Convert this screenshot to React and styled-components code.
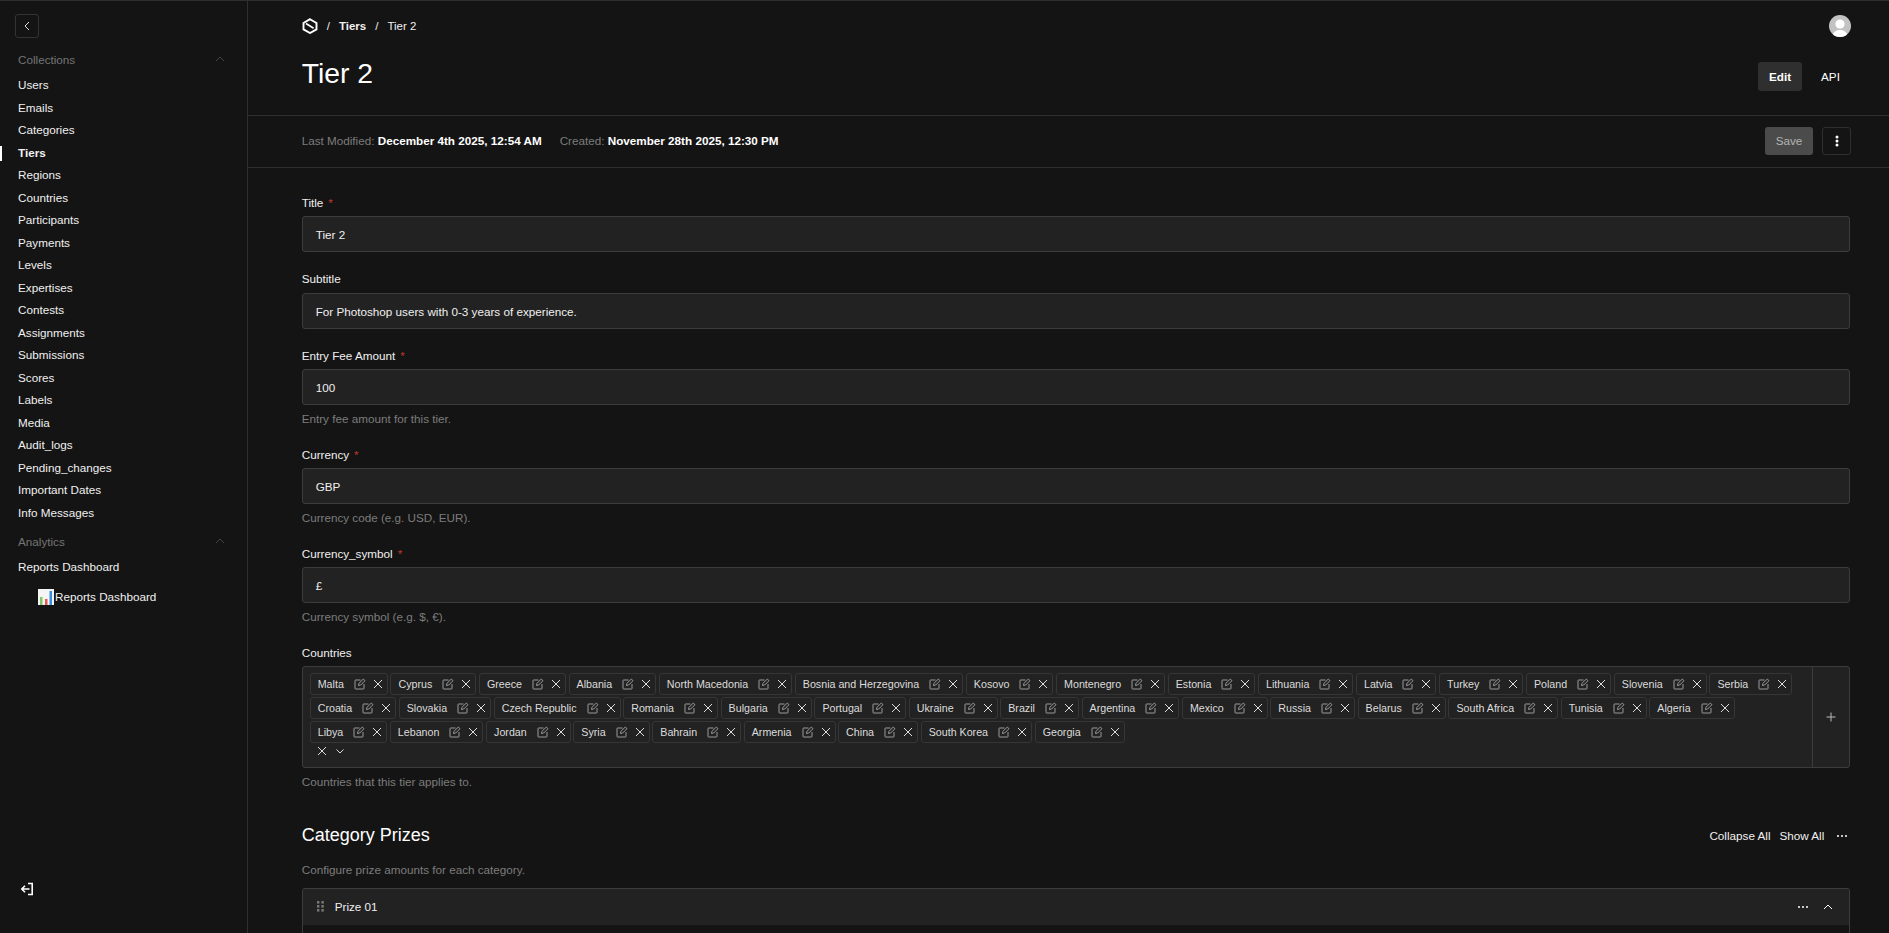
import React from 'react';
import styled, { createGlobalStyle } from 'styled-components';

const GlobalStyle = createGlobalStyle`
    html, body {
        margin: 0;
        height: 100%;
        overflow: hidden;
        background: #141414;
    }
    body {
        font-family: "Liberation Sans", Arial, sans-serif;
        font-size: 13px;
        color: #fff;
    }
    * {
        box-sizing: border-box;
    }
`

const Page = styled.div`
    display: flex;
    height: 933px;
    overflow: hidden;
    border-top: 1px solid #2f2f2f;
`

const Sidebar = styled.aside`
    width: 248px;
    flex-shrink: 0;
    border-right: 1px solid #2f2f2f;
    padding: 13px 0 0 18px;
    position: relative;
`

const BackButton = styled.div`
    width: 24px;
    height: 24px;
    margin-left: -3px;
    border: 1px solid #333;
    border-radius: 3px;
    display: flex;
    align-items: center;
    justify-content: center;
`

const GroupHead = styled.div`
    display: flex;
    justify-content: space-between;
    align-items: center;
    height: 16px;
    margin-top: ${props => props.$top}px;
    margin-bottom: ${props => props.$bottom}px;
    padding-right: 21px;
    color: #747474;
    font-size: 11.7px;
`

const NavItem = styled.div`
    height: 22.5px;
    line-height: 22.5px;
    color: #f0f0f0;
    font-size: 11.7px;
    font-weight: ${props => props.$active ? 700 : 400};
    position: relative;
`

const ActiveMark = styled.span`
    position: absolute;
    left: -18px;
    top: 4px;
    width: 2px;
    height: 15px;
    background: #fff;
`

const SubLink = styled.div`
    display: flex;
    align-items: center;
    gap: 1px;
    margin: 10px 0 0 20px;
    font-size: 11.7px;
    color: #f0f0f0;
`

const Logout = styled.div`
    position: absolute;
    left: 20px;
    top: 881px;
    display: flex;
`

const Main = styled.main`
    flex: 1;
    min-width: 0;
    overflow: hidden;
`

const Header = styled.header`
    height: 115px;
    padding: 0 38px 0 53.7px;
    border-bottom: 1px solid #2f2f2f;
    display: grid;
    grid-template-columns: 1fr auto;
    align-content: start;
`

const Crumbs = styled.div`
    display: flex;
    align-items: center;
    height: 50px;
    font-size: 11.5px;
    color: #f0f0f0;
`

const CrumbSep = styled.span`
    margin: 0 9px;
`

const Avatar = styled.div`
    display: flex;
    align-items: center;
    justify-content: flex-end;
    height: 50px;
`

const PageTitle = styled.h1`
    margin: 0;
    font-size: 28.3px;
    font-weight: 400;
    line-height: 44px;
`

const Tabs = styled.div`
    display: flex;
    align-items: flex-start;
    justify-content: flex-end;
    padding-top: 11px;
    gap: 8px;
`

const Tab = styled.div`
    width: ${props => props.$width}px;
    height: 29px;
    line-height: 29px;
    text-align: center;
    border-radius: 3px;
    font-size: 11.7px;
    font-weight: ${props => props.$active ? 700 : 400};
    background: ${props => props.$active ? '#2f2f2f' : 'transparent'};
`

const MetaBar = styled.div`
    display: flex;
    align-items: center;
    justify-content: space-between;
    height: 52px;
    padding: 0 38px 1px 53.7px;
    border-bottom: 1px solid #2f2f2f;
`

const MetaText = styled.div`
    display: flex;
    gap: 18px;
    margin-bottom: 1px;
    font-size: 11.7px;
    color: #7c7c7c;
    b {
        color: #fff;
    }
`

const MetaActions = styled.div`
    display: flex;
    align-items: center;
    gap: 9px;
`

const SaveButton = styled.div`
    width: 48px;
    height: 28px;
    line-height: 28px;
    text-align: center;
    border-radius: 3px;
    background: #4b4b4b;
    color: #b4b4b4;
    font-size: 11.7px;
`

const MoreButton = styled.div`
    width: 29px;
    height: 28px;
    border: 1px solid #2f2f2f;
    border-radius: 3px;
    display: flex;
    align-items: center;
    justify-content: center;
`

const Form = styled.div`
    padding: 26.5px 38.7px 0 53.7px;
`

const Field = styled.div`
    margin-bottom: ${props => props.$bottom}px;
`

const Label = styled.label`
    display: block;
    font-size: 11.7px;
    line-height: 16px;
    margin-bottom: 5.5px;
    color: #f0f0f0;
    span {
        color: #c0392b;
        margin-left: 5px;
    }
`

const Input = styled.div`
    height: 36px;
    line-height: 35px;
    padding: 0 13px;
    background: #222;
    border: 1px solid #3c3c3c;
    border-radius: 3px;
    font-size: 11.7px;
    color: #f0f0f0;
`

const Hint = styled.div`
    margin-top: 5.5px;
    font-size: 11.7px;
    line-height: 16px;
    color: #7c7c7c;
`

const SelectBox = styled.div`
    display: flex;
    height: 102px;
    background: #222;
    border: 1px solid #3c3c3c;
    border-radius: 3px;
`

const ChipArea = styled.div`
    flex: 1;
    min-width: 0;
    padding: 6px 7px;
`

const ChipList = styled.div`
    display: flex;
    flex-wrap: wrap;
    gap: 2px 2.6px;
`

const Chip = styled.div`
    display: flex;
    align-items: center;
    height: 22px;
    padding: 0 3px 0 7px;
    border: 1px solid #363636;
    border-radius: 3px;
    font-size: 10.7px;
    color: #dcdcdc;
    svg:first-of-type {
        margin-left: 10px;
        margin-right: 6px;
    }
`

const SelectControls = styled.div`
    display: flex;
    align-items: center;
    gap: 6px;
    margin: 2px 0 0 6px;
`

const AddButton = styled.div`
    width: 37px;
    flex-shrink: 0;
    border-left: 1px solid #3c3c3c;
    display: flex;
    align-items: center;
    justify-content: center;
`

const SectionHead = styled.div`
    display: flex;
    align-items: center;
    justify-content: space-between;
    margin-top: 34px;
    height: 24px;
`

const SectionTitle = styled.h2`
    margin: 0;
    font-size: 18px;
    font-weight: 400;
`

const SectionActions = styled.div`
    display: flex;
    align-items: center;
    gap: 9px;
    font-size: 11.7px;
    color: #f0f0f0;
    padding-right: 2px;
    svg {
        margin-left: 3px;
    }
`

const SectionNote = styled.div`
    margin-top: 14px;
    margin-bottom: 10px;
    font-size: 11.7px;
    line-height: 16px;
    color: #7c7c7c;
`

const Prize = styled.div`
    border: 1px solid #3c3c3c;
    border-bottom: none;
    border-radius: 3px 3px 0 0;
`

const PrizeHead = styled.div`
    display: flex;
    align-items: center;
    justify-content: space-between;
    height: 36px;
    padding: 0 15px 0 14px;
    background: #222;
`

const PrizeName = styled.div`
    display: flex;
    align-items: center;
    gap: 11px;
    font-size: 11.7px;
    color: #f0f0f0;
`

const PrizeActions = styled.div`
    display: flex;
    align-items: center;
    gap: 13px;
`

const PrizeBody = styled.div`
    height: 40px;
`

const Stroke = ({ size = 12, color = '#dcdcdc', width = 1, children }) => (
    <svg width={size} height={size} viewBox="0 0 12 12" fill="none" stroke={color} strokeWidth={width}>
        {children}
    </svg>
)

const Chevron = ({ dir = 'down', color }) => {
    const paths = {
        up: 'M2 8 6 4l4 4',
        down: 'M2.5 4.5 6 8l3.5-3.5',
        left: 'M8 2 4 6l4 4',
    };
    return <Stroke color={color}><path d={paths[dir]} /></Stroke>;
}

const Cross = ({ color }) => (
    <Stroke color={color}>
        <path d="M2 2l8 8M10 2l-8 8" />
    </Stroke>
)

const EditIcon = () => (
    <Stroke color="#9a9a9a">
        <path d="M6.5 2H1.5a.5.5 0 0 0-.5.5v8a.5.5 0 0 0 .5.5h8a.5.5 0 0 0 .5-.5V6" />
        <path d="M4.5 7.5 5 5.3 9.3 1 11 2.7 6.7 7z" />
    </Stroke>
)

const Dots = ({ vertical, dot = 2 }) => (
    <svg width="12" height="12" viewBox="0 0 12 12" fill="#fff" style={vertical ? { transform: 'rotate(90deg)' } : undefined}>
        {[2, 6, 10].map(x => <circle key={x} cx={x} cy="6" r={dot / 2} />)}
    </svg>
)

const Logo = () => (
    <svg width="16" height="16" viewBox="0 0 16 16" fill="none" stroke="#fff">
        <path d="M8 1.2 14.5 5v6.4L8 15 1.5 11.4V5z" strokeWidth="1.9" />
        <path d="M4 5.6l7.6 4.6" strokeWidth="1.7" />
    </svg>
)

const UserIcon = () => (
    <svg width="22" height="22" viewBox="0 0 22 22">
        <defs>
            <clipPath id="avatar-clip"><circle cx="11" cy="11" r="11" /></clipPath>
        </defs>
        <g clipPath="url(#avatar-clip)">
            <rect width="22" height="22" fill="#c2c2c2" />
            <circle cx="11" cy="9" r="4.6" fill="#fff" />
            <ellipse cx="11" cy="20" rx="7" ry="5" fill="#fff" />
        </g>
    </svg>
)

const ChartEmoji = () => (
    <svg width="16" height="16" viewBox="0 0 16 16">
        <rect width="16" height="16" fill="#f5f5f5" />
        <rect x="2" y="8" width="2.5" height="8" fill="#7fc96b" />
        <rect x="7" y="10" width="2.5" height="6" fill="#e8584f" />
        <rect x="11.5" y="2" width="2.5" height="14" fill="#3a8fdc" />
    </svg>
)

const LogoutIcon = () => (
    <svg width="14" height="14" viewBox="0 0 14 14" fill="none" stroke="#fff" strokeWidth="1.6">
        <path d="M8 1.5h4.2v11H8" />
        <path d="M9.5 7H2M5 3.8 1.8 7 5 10.2" />
    </svg>
)

const Grip = () => (
    <svg width="7" height="11" viewBox="0 0 7 11" fill="#777">
        {[0, 4, 8].map(y => (
            <React.Fragment key={y}>
                <rect x="0" y={y} width="2.4" height="2.6" />
                <rect x="4.4" y={y} width="2.4" height="2.6" />
            </React.Fragment>
        ))}
    </svg>
)

const collections = ['Users', 'Emails', 'Categories', 'Tiers', 'Regions', 'Countries', 'Participants', 'Payments', 'Levels', 'Expertises', 'Contests', 'Assignments', 'Submissions', 'Scores', 'Labels', 'Media', 'Audit_logs', 'Pending_changes', 'Important Dates', 'Info Messages'];

const countries = ['Malta', 'Cyprus', 'Greece', 'Albania', 'North Macedonia', 'Bosnia and Herzegovina', 'Kosovo', 'Montenegro', 'Estonia', 'Lithuania', 'Latvia', 'Turkey', 'Poland', 'Slovenia', 'Serbia', 'Croatia', 'Slovakia', 'Czech Republic', 'Romania', 'Bulgaria', 'Portugal', 'Ukraine', 'Brazil', 'Argentina', 'Mexico', 'Russia', 'Belarus', 'South Africa', 'Tunisia', 'Algeria', 'Libya', 'Lebanon', 'Jordan', 'Syria', 'Bahrain', 'Armenia', 'China', 'South Korea', 'Georgia'];

const fields = [
    { label: 'Title', required: true, value: 'Tier 2' },
    { label: 'Subtitle', value: 'For Photoshop users with 0-3 years of experience.' },
    { label: 'Entry Fee Amount', required: true, value: '100', hint: 'Entry fee amount for this tier.' },
    { label: 'Currency', required: true, value: 'GBP', hint: 'Currency code (e.g. USD, EUR).' },
    { label: 'Currency_symbol', required: true, value: '£', hint: 'Currency symbol (e.g. $, €).' },
];

function App() {
    return (
        <>
            <GlobalStyle />
            <Page>
                <Sidebar>
                    <BackButton><Chevron dir="left" color="#dcdcdc" /></BackButton>
                    <GroupHead $top={13} $bottom={7}>Collections<Chevron dir="up" color="#444" /></GroupHead>
                    {collections.map(name => (
                        <NavItem key={name} $active={name === 'Tiers'}>
                            {name === 'Tiers' && <ActiveMark />}
                            {name}
                        </NavItem>
                    ))}
                    <GroupHead $top={9} $bottom={7}>Analytics<Chevron dir="up" color="#444" /></GroupHead>
                    <NavItem>Reports Dashboard</NavItem>
                    <SubLink><ChartEmoji />Reports Dashboard</SubLink>
                    <Logout><LogoutIcon /></Logout>
                </Sidebar>
                <Main>
                    <Header>
                        <Crumbs>
                            <Logo />
                            <CrumbSep>/</CrumbSep>
                            <b>Tiers</b>
                            <CrumbSep>/</CrumbSep>
                            Tier 2
                        </Crumbs>
                        <Avatar><UserIcon /></Avatar>
                        <PageTitle>Tier 2</PageTitle>
                        <Tabs>
                            <Tab $active $width={44}>Edit</Tab>
                            <Tab $width={41}>API</Tab>
                        </Tabs>
                    </Header>
                    <MetaBar>
                        <MetaText>
                            <span>Last Modified: <b>December 4th 2025, 12:54 AM</b></span>
                            <span>Created: <b>November 28th 2025, 12:30 PM</b></span>
                        </MetaText>
                        <MetaActions>
                            <SaveButton>Save</SaveButton>
                            <MoreButton><Dots vertical dot={3} /></MoreButton>
                        </MetaActions>
                    </MetaBar>
                    <Form>
                        {fields.map(field => (
                            <Field key={field.label} $bottom={field.hint ? 20 : 19}>
                                <Label>{field.label}{field.required && <span>*</span>}</Label>
                                <Input>{field.value}</Input>
                                {field.hint && <Hint>{field.hint}</Hint>}
                            </Field>
                        ))}
                        <Field $bottom={0}>
                            <Label>Countries</Label>
                            <SelectBox>
                                <ChipArea>
                                    <ChipList>
                                        {countries.map(name => (
                                            <Chip key={name}>
                                                {name}
                                                <EditIcon />
                                                <Cross />
                                            </Chip>
                                        ))}
                                    </ChipList>
                                    <SelectControls>
                                        <Cross />
                                        <Chevron />
                                    </SelectControls>
                                </ChipArea>
                                <AddButton>
                                    <Stroke color="#bbb"><path d="M6 1.5v9M1.5 6h9" /></Stroke>
                                </AddButton>
                            </SelectBox>
                            <Hint>Countries that this tier applies to.</Hint>
                        </Field>
                        <SectionHead>
                            <SectionTitle>Category Prizes</SectionTitle>
                            <SectionActions>
                                <span>Collapse All</span>
                                <span>Show All</span>
                                <Dots />
                            </SectionActions>
                        </SectionHead>
                        <SectionNote>Configure prize amounts for each category.</SectionNote>
                        <Prize>
                            <PrizeHead>
                                <PrizeName><Grip />Prize 01</PrizeName>
                                <PrizeActions>
                                    <Dots />
                                    <Chevron dir="up" color="#fff" />
                                </PrizeActions>
                            </PrizeHead>
                            <PrizeBody />
                        </Prize>
                    </Form>
                </Main>
            </Page>
        </>
    )
}

export default App
